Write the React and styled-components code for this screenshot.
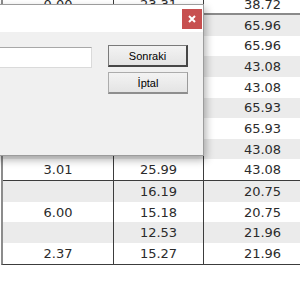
import React from "react";
import styled, { createGlobalStyle } from "styled-components";

const Global = createGlobalStyle`
  html, body { margin: 0; padding: 0; background: #fff; }
  body { width: 300px; height: 300px; overflow: hidden; }
`;

const Stage = styled.div`
  position: relative;
  width: 300px;
  height: 300px;
  overflow: hidden;
  font-family: "DejaVu Sans", Verdana, sans-serif;
`;

const Table = styled.div`
  margin-top: -5px;
  margin-left: 1px;
  width: 340px;
  border-left: 2px solid #8c8c8c;
  border-bottom: 1px solid #3c3c3c;
`;

const Group = styled.div`
  border-bottom: ${(p) => p.$divider};
`;

const Row = styled.div`
  display: grid;
  grid-template-columns: 111px 90px 117px;
  height: ${(p) => p.$h || "20.65px"};
  background: ${(p) => (p.$shade ? "#ebebeb" : "#ffffff")};
`;

const Cell = styled.div`
  display: flex;
  align-items: center;
  justify-content: center;
  font-size: 13px;
  color: #2b2b2b;
  border-right: ${(p) => (p.$last ? "none" : "1px solid #3c3c3c")};
`;

const Dialog = styled.div`
  position: absolute;
  left: -100px;
  top: 4px;
  width: 302px;
  height: 150px;
  border: 1px solid #9c9c9c;
  background: #f0f0f0;
  box-shadow: 2px 4px 8px rgba(0, 0, 0, 0.3);
  display: flex;
  flex-direction: column;
`;

const TitleBar = styled.div`
  height: 27px;
  background: #ffffff;
  display: flex;
  justify-content: flex-end;
  align-items: flex-start;
  padding-top: 4px;
  padding-right: 1px;
  box-sizing: border-box;
`;

const CloseBtn = styled.div`
  width: 20px;
  height: 20px;
  background: #c75050;
  display: flex;
  align-items: center;
  justify-content: center;
`;

const Body = styled.div`
  flex: 1;
  display: flex;
  gap: 16px;
  padding: 13px 15px 0 10px;
`;

const InputCol = styled.div`
  flex: 1;
  padding-top: 2px;
`;

const TextInput = styled.div`
  height: 21px;
  box-sizing: border-box;
  background: #ffffff;
  border: 1px solid #dadada;
  border-top-color: #a8a8a8;
  border-left-color: #c4c4c4;
`;

const ButtonCol = styled.div`
  width: 80px;
  display: flex;
  flex-direction: column;
  gap: 5px;
`;

const Button = styled.div`
  height: 22px;
  box-sizing: border-box;
  display: flex;
  align-items: center;
  justify-content: center;
  font-family: "Liberation Sans", Arial, sans-serif;
  font-size: 11px;
  color: #000;
  background: linear-gradient(#f3f3f3, #e4e4e4);
  border: 1px solid ${(p) => (p.$default ? "#7a7a7a" : "#acacac")};
  border-right: ${(p) => (p.$default ? "2px solid #474747" : "1px solid #9a9a9a")};
  border-bottom: ${(p) => (p.$default ? "2px solid #474747" : "2px solid #8e8e8e")};
`;

const groups = [
  {
    divider: "2px solid #8a8a8a",
    rows: [{ a: "0.00", b: "23.31", c: "38.72", h: "18px", shade: false }],
  },
  {
    divider: "1px solid #3c3c3c",
    rows: [
      { a: "", b: "", c: "65.96" },
      { a: "", b: "", c: "65.96" },
      { a: "", b: "", c: "43.08" },
      { a: "", b: "", c: "43.08" },
      { a: "", b: "", c: "65.93" },
      { a: "", b: "", c: "65.93" },
      { a: "", b: "", c: "43.08" },
      { a: "3.01", b: "25.99", c: "43.08" },
    ],
  },
  {
    divider: "none",
    rows: [
      { a: "", b: "16.19", c: "20.75" },
      { a: "6.00", b: "15.18", c: "20.75" },
      { a: "", b: "12.53", c: "21.96" },
      { a: "2.37", b: "15.27", c: "21.96" },
    ],
  },
];

export default function App() {
  return (
    <>
      <Global />
      <Stage>
        <Table>
          {groups.map((g, gi) => (
            <Group key={gi} $divider={g.divider}>
              {g.rows.map((r, ri) => (
                <Row
                  key={ri}
                  $h={r.h}
                  $shade={r.shade === undefined ? ri % 2 === 0 : r.shade}
                >
                  <Cell>{r.a}</Cell>
                  <Cell>{r.b}</Cell>
                  <Cell $last>{r.c}</Cell>
                </Row>
              ))}
            </Group>
          ))}
        </Table>
        <Dialog>
          <TitleBar>
            <CloseBtn>
              <svg width="8" height="8" viewBox="0 0 8 8">
                <path d="M1 1L7 7M7 1L1 7" stroke="#fff" strokeWidth="2" />
              </svg>
            </CloseBtn>
          </TitleBar>
          <Body>
            <InputCol>
              <TextInput />
            </InputCol>
            <ButtonCol>
              <Button $default>Sonraki</Button>
              <Button>İptal</Button>
            </ButtonCol>
          </Body>
        </Dialog>
      </Stage>
    </>
  );
}
